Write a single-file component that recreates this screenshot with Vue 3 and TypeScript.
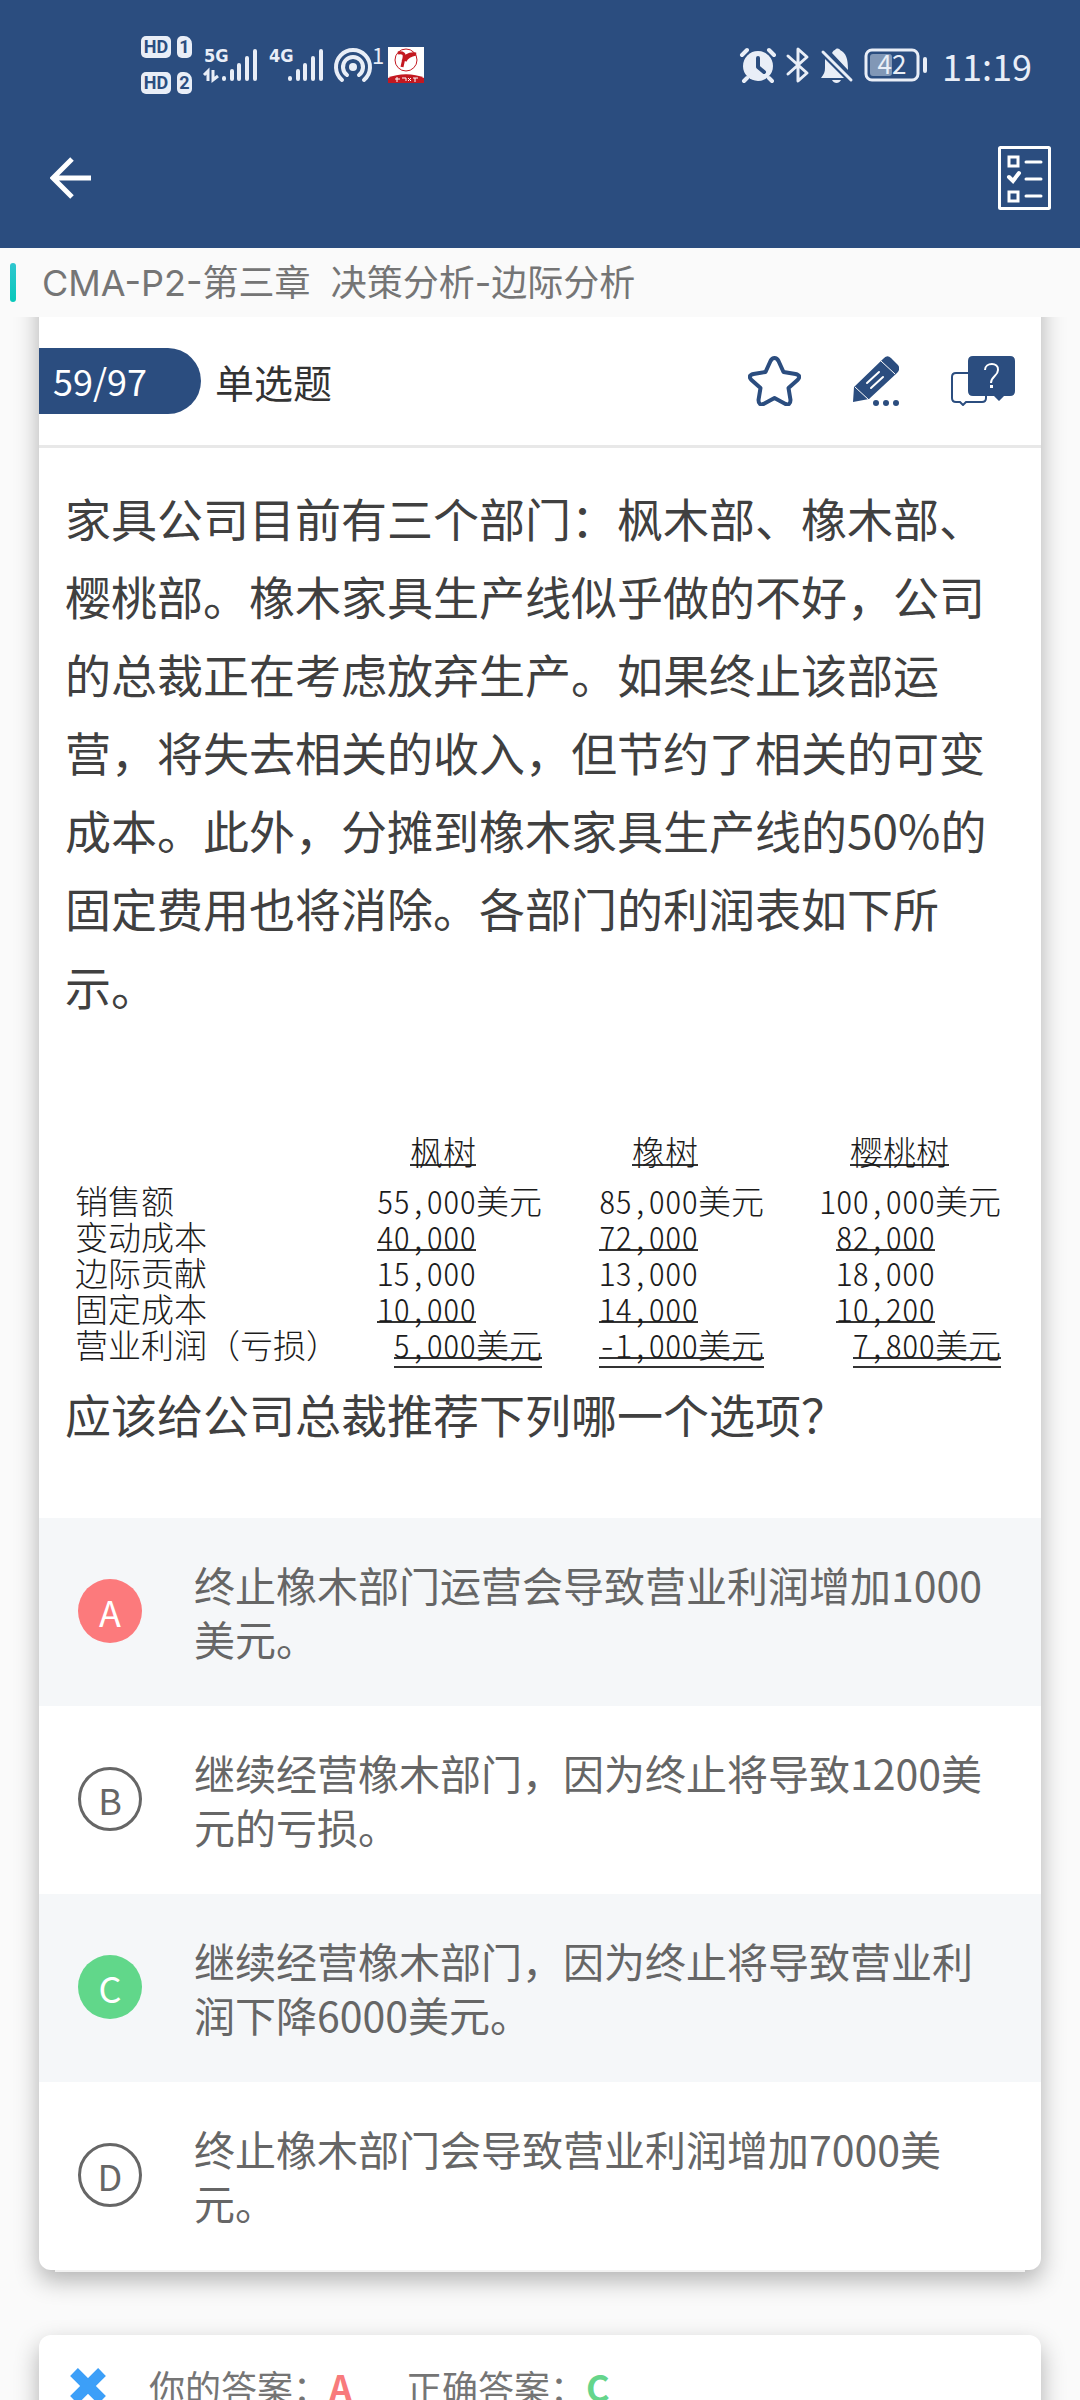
<script setup lang="ts">
import { ref } from 'vue'

interface Option {
  key: string
  text: string
  state: 'wrong' | 'right' | 'plain'
}

interface Amount {
  value: string
  unit?: string
  rule?: 'single' | 'double'
}

interface ProfitRow {
  label: string
  cells: Amount[]
}

const chapter = 'CMA-P2-第三章\u00a0 决策分析-边际分析'

const stem =
  '家具公司目前有三个部门：枫木部、橡木部、樱桃部。橡木家具生产线似乎做的不好，公司的总裁正在考虑放弃生产。如果终止该部运营，将失去相关的收入，但节约了相关的可变成本。此外，分摊到橡木家具生产线的50%的固定费用也将消除。各部门的利润表如下所示。'

const ask = '应该给公司总裁推荐下列哪一个选项？'

const departments: string[] = ['枫树', '橡树', '樱桃树']

const rows: ProfitRow[] = [
  {
    label: '销售额',
    cells: [
      { value: '55,000', unit: '美元' },
      { value: '85,000', unit: '美元' },
      { value: '100,000', unit: '美元' },
    ],
  },
  {
    label: '变动成本',
    cells: [
      { value: '40,000', rule: 'single' },
      { value: '72,000', rule: 'single' },
      { value: '82,000', rule: 'single' },
    ],
  },
  { label: '边际贡献', cells: [{ value: '15,000' }, { value: '13,000' }, { value: '18,000' }] },
  {
    label: '固定成本',
    cells: [
      { value: '10,000', rule: 'single' },
      { value: '14,000', rule: 'single' },
      { value: '10,200', rule: 'single' },
    ],
  },
  {
    label: '营业利润（亏损）',
    cells: [
      { value: '5,000', unit: '美元', rule: 'double' },
      { value: '-1,000', unit: '美元', rule: 'double' },
      { value: '7,800', unit: '美元', rule: 'double' },
    ],
  },
]

const options: Option[] = [
  { key: 'A', text: '终止橡木部门运营会导致营业利润增加1000美元。', state: 'wrong' },
  { key: 'B', text: '继续经营橡木部门，因为终止将导致1200美元的亏损。', state: 'plain' },
  { key: 'C', text: '继续经营橡木部门，因为终止将导致营业利润下降6000美元。', state: 'right' },
  { key: 'D', text: '终止橡木部门会导致营业利润增加7000美元。', state: 'plain' },
]

const chosen = ref<string>('A')
</script>

<template>
  <div class="page">
    <header class="top">
      <div class="status">
        <div class="status-left">
          <div class="hd-list">
            <div v-for="n in 2" :key="n" class="hd-row">
              <span class="hd">HD</span>
              <span class="sim">{{ n }}</span>
            </div>
          </div>
          <svg class="signal" width="54" height="36" viewBox="0 0 54 36" aria-hidden="true">
            <text x="0" y="15" class="net">5G</text>
            <g fill="none" stroke="#e9eef7" stroke-width="3">
              <path d="M0 28l4-4v10M9 23v10l5-4" />
            </g>
            <g stroke="#e9eef7" stroke-width="4" stroke-linecap="round">
              <path d="M20 31v1M28 24v8M35 18v14M43 11v21M51 4v28" />
            </g>
          </svg>
          <svg class="signal" width="54" height="36" viewBox="0 0 54 36" aria-hidden="true">
            <text x="0" y="15" class="net">4G</text>
            <g stroke="#e9eef7" stroke-width="4" stroke-linecap="round">
              <path d="M21 31v1M29 24v8M36 18v14M44 11v21M52 4v28" />
            </g>
          </svg>
          <svg class="hotspot" width="48" height="36" viewBox="0 0 48 36" aria-hidden="true">
            <circle cx="19" cy="20" r="4" fill="#e9eef7" />
            <g fill="none" stroke="#e9eef7" stroke-width="4" stroke-linecap="round">
              <path d="M13 28a10 10 0 1 1 12 0" />
              <path d="M8 33a17 17 0 1 1 22 0" />
            </g>
            <text x="38" y="17" class="sup">1</text>
          </svg>
          <svg width="36" height="36" viewBox="0 0 36 36" aria-hidden="true">
            <rect width="36" height="36" fill="#fff" />
            <circle cx="18" cy="13" r="11" fill="none" stroke="#c31820" stroke-width="1" />
            <path
              d="M10 6c5-1 7 1 6 5l-2 9M15 14c2-5 6-8 13-7-5 1-9 3-11 7"
              fill="none"
              stroke="#c31820"
              stroke-width="3"
            />
            <path d="M0 36v-5c10-5 26-5 36 0v5z" fill="#c31820" />
            <path
              d="M7 32h5M9 30v5M14 31h4v3M20 31l3 3M23 31l-3 3M25 31h5M27 31v4"
              stroke="#fff"
              stroke-width="1"
              fill="none"
            />
          </svg>
        </div>
        <div class="status-right">
          <svg width="36" height="36" viewBox="0 0 36 36" aria-hidden="true">
            <circle cx="18" cy="19" r="15" fill="#e9eef7" />
            <path
              d="M2 8l5-5M34 8l-5-5M7 31l-3 3M29 31l3 3"
              stroke="#e9eef7"
              stroke-width="4"
              stroke-linecap="round"
            />
            <path
              d="M18 11v9l6 5"
              fill="none"
              stroke="#2b4d7f"
              stroke-width="4"
              stroke-linecap="round"
              stroke-linejoin="round"
            />
          </svg>
          <svg width="24" height="36" viewBox="0 0 24 36" aria-hidden="true">
            <path
              d="M2 9l19 17-9 8V2l9 8L2 27"
              fill="none"
              stroke="#e9eef7"
              stroke-width="3"
              stroke-linecap="round"
              stroke-linejoin="round"
            />
          </svg>
          <svg width="34" height="36" viewBox="0 0 34 36" aria-hidden="true">
            <path
              d="M5 12L24 31H1c3-4 4-6 4-10zM12 6c1-2 2-3 3-3 2-3 5-1 5 0 6 3 8 8 8 20z"
              fill="#e9eef7"
            />
            <path d="M12 33h9c-2 4-7 4-9 0z" fill="#e9eef7" />
            <path d="M3 5l28 28" stroke="#e9eef7" stroke-width="3" stroke-linecap="round" />
          </svg>
          <svg width="64" height="36" viewBox="0 0 64 36" aria-hidden="true">
            <rect x="2" y="3" width="52" height="30" rx="6" fill="none" stroke="#e9eef7" stroke-width="3" />
            <rect x="6" y="7" width="22" height="22" rx="3" fill="#8197b6" />
            <rect x="59" y="10" width="4" height="16" rx="2" fill="#e9eef7" />
            <text x="28" y="27" class="battery">42</text>
          </svg>
          <span class="clock">11:19</span>
        </div>
      </div>
      <nav class="nav">
        <button type="button" class="icon-btn" aria-label="返回">
          <svg width="42" height="42" viewBox="0 0 42 42">
            <path d="M41 21H4M22 2L3 21l19 19" fill="none" stroke="#fff" stroke-width="5" />
          </svg>
        </button>
        <button type="button" class="icon-btn" aria-label="答题卡">
          <svg width="53" height="64" viewBox="0 0 53 64">
            <rect x="1.500" y="1.500" width="50" height="61" rx="1" fill="none" stroke="#fff" stroke-width="3" />
            <g fill="none" stroke="#fff" stroke-width="3">
              <rect x="11" y="11" width="9" height="9" />
              <rect x="11" y="46" width="9" height="9" />
              <path d="M11 31l4 4 6-8" stroke-width="4" stroke-linecap="round" />
              <path d="M28 16h15M28 33h15M28 50h15" stroke-linecap="round" />
            </g>
          </svg>
        </button>
      </nav>
    </header>

    <div class="chapter">
      <span class="chapter-bar"></span>
      <h1 class="chapter-title">{{ chapter }}</h1>
    </div>

    <main class="content">
      <section class="card question">
        <div class="card-head">
          <span class="progress">59/97</span>
          <span class="kind">单选题</span>
          <div class="tools">
            <button type="button" class="icon-btn" aria-label="收藏">
              <svg width="53" height="50" viewBox="0 0 53 50">
                <path
                  d="M26.500 2c2 0 3 1 4 3l5 11 12 2c4 1 5 3 2 6l-9 8 2 12c0 4-2 5-5 4l-11-6-11 6c-3 1-5 0-5-4l2-12-9-8c-3-3-2-5 2-6l12-2 5-11c1-2 2-3 4-3z"
                  fill="none"
                  stroke="#2b4d7f"
                  stroke-width="4"
                  stroke-linejoin="round"
                />
              </svg>
            </button>
            <button type="button" class="icon-btn" aria-label="笔记">
              <svg width="46" height="50" viewBox="0 0 46 50">
                <path d="M30 3q4-5 8-1l7 7q3 4-1 8L16 43 0 46l1-15z" fill="#2b4d7f" />
                <path d="M2 31l14 13M28 5l14 13" stroke="#fff" stroke-width="1" />
                <path d="M14 27l12-11M18 32l12-11" stroke="#fff" stroke-width="2" stroke-linecap="round" />
                <g fill="#2b4d7f">
                  <circle cx="23" cy="47" r="3" />
                  <circle cx="33" cy="47" r="3" />
                  <circle cx="43" cy="47" r="3" />
                </g>
              </svg>
            </button>
            <button type="button" class="icon-btn" aria-label="答疑">
              <svg width="64" height="50" viewBox="0 0 64 50">
                <path
                  d="M17 17H5c-3 0-4 1-4 4v21c0 3 1 4 4 4h4l3 3 3-3h16c3 0 4-1 4-4v-3"
                  fill="none"
                  stroke="#2b4d7f"
                  stroke-width="2"
                />
                <path d="M22 0h37q5 0 5 5v30q0 5-5 5h-6l-5 5-5-5H22q-5 0-5-5V5q0-5 5-5z" fill="#2b4d7f" />
                <path d="M34 14c0-8 14-8 13 0 0 6-7 6-7 13" fill="none" stroke="#fff" stroke-width="2" />
                <rect x="39" y="29" width="3" height="3" fill="#fff" />
              </svg>
            </button>
          </div>
        </div>

        <div class="article">
          <p class="stem">{{ stem }}</p>
          <table class="profit">
            <colgroup>
              <col />
              <col class="amount-col" />
              <col class="amount-col" />
              <col class="amount-col wide" />
            </colgroup>
            <thead>
              <tr>
                <td></td>
                <th v-for="d in departments" :key="d" scope="col">
                  <span class="figure single">{{ d }}</span>
                </th>
              </tr>
            </thead>
            <tbody>
              <tr v-for="row in rows" :key="row.label">
                <th scope="row">{{ row.label }}</th>
                <td v-for="(cell, i) in row.cells" :key="i" :class="{ bare: !cell.unit }">
                  <span class="figure" :class="cell.rule">{{ cell.value }}{{ cell.unit }}</span>
                </td>
              </tr>
            </tbody>
          </table>
          <p class="stem">{{ ask }}</p>
        </div>

        <div class="options" role="radiogroup" aria-label="选项">
          <label v-for="o in options" :key="o.key" class="option">
            <span class="mark" :class="o.state">
              <input v-model="chosen" type="radio" name="answer" :value="o.key" />
              <span class="letter">{{ o.key }}</span>
            </span>
            <span class="option-text">{{ o.text }}</span>
          </label>
        </div>
      </section>

      <section class="card result">
        <svg width="38" height="38" viewBox="0 0 38 38" aria-hidden="true">
          <path d="M5 5l28 28M33 5L5 33" stroke="#3c9ff8" stroke-width="11" />
        </svg>
        <p class="verdict">你的答案：<b class="bad">A</b></p>
        <p class="verdict">正确答案：<b class="good">C</b></p>
      </section>
    </main>
  </div>
</template>

<style>
body {
  background: #fafafa;
}
</style>

<style scoped>
.page {
  display: flex;
  flex-direction: column;
  height: 100vh;
  overflow: hidden;
  background: #fafafa;
  color: #404040;
  font-family: 'Noto Sans CJK SC', sans-serif;
}

.top {
  flex: none;
  background: #2b4d7f;
}

.status {
  display: flex;
  align-items: center;
  justify-content: space-between;
  height: 108px;
  padding: 22px 48px 0 141px;
  box-sizing: border-box;
  color: #e9eef7;
}

.status-left,
.status-right {
  display: flex;
  align-items: center;
}

.status svg {
  overflow: visible;
}

.status-right {
  gap: 10px;
}

.hd-list {
  display: grid;
  gap: 14px;
  margin-right: 12px;
}

.hd-row {
  display: flex;
  gap: 6px;
}

.hd,
.sim {
  height: 22px;
  border-radius: 5px;
  background: #e9eef7;
  color: #2b4d7f;
  font: bold 18px/22px Roboto, sans-serif;
  text-align: center;
}

.hd {
  width: 30px;
}

.sim {
  width: 15px;
  border-top-right-radius: 8px;
}

.signal {
  margin-right: 11px;
}

.hotspot {
  margin-right: 6px;
}

.net {
  fill: #e9eef7;
  font: bold 18px 'Liberation Sans Narrow', 'DejaVu Sans Condensed', sans-serif;
}

.sup {
  fill: #e9eef7;
  font: 22px 'Noto Sans CJK SC', sans-serif;
}

.battery {
  fill: #e9eef7;
  font: 26px 'Noto Sans CJK SC', sans-serif;
  text-anchor: middle;
}

.clock {
  margin-left: 4px;
  font-size: 36px;
  line-height: 36px;
}

.nav {
  display: flex;
  align-items: center;
  justify-content: space-between;
  height: 140px;
  padding: 0 29px 0 50px;
}

.icon-btn {
  display: flex;
  padding: 0;
  border: 0;
  background: none;
}

.chapter {
  position: relative;
  z-index: 1;
  display: flex;
  flex: none;
  align-items: center;
  gap: 26px;
  height: 69px;
  padding-left: 10px;
  background: #fafafa;
}

.chapter-bar {
  width: 6px;
  height: 39px;
  border-radius: 3px;
  background: linear-gradient(#2fc6cf, #08c8ba);
}

.chapter-title {
  margin: 0;
  color: #757575;
  font-family: Inter, 'Noto Sans CJK SC', sans-serif;
  font-size: 36px;
  font-weight: 400;
  line-height: 48px;
  white-space: pre;
}

.content {
  flex: 1;
  min-height: 0;
  margin-top: -40px;
  padding: 0 39px;
  overflow-y: auto;
  scrollbar-width: none;
}

.card {
  background: #fff;
  box-shadow: 0 10px 24px rgba(0, 0, 0, 0.3);
}

.question {
  position: relative;
  padding-top: 40px;
  border-radius: 0 0 12px 12px;
}

.question::after {
  position: absolute;
  right: 16px;
  bottom: -2px;
  left: 16px;
  height: 2px;
  background: #f2f2f2;
  content: '';
}

.card-head {
  display: flex;
  align-items: center;
  height: 128px;
  padding-right: 26px;
  border-bottom: 3px solid #e8e8e8;
}

.progress {
  width: 162px;
  height: 66px;
  padding-left: 14px;
  box-sizing: border-box;
  border-radius: 0 33px 33px 0;
  background: #2b4d7f;
  color: #fff;
  font-size: 36px;
  line-height: 64px;
}

.kind {
  margin-left: 14px;
  color: #333;
  font-size: 39px;
  line-height: 64px;
}

.tools {
  display: flex;
  gap: 52px;
  margin-left: auto;
}

.article {
  padding: 30px 26px 66px;
}

.stem {
  margin: 0;
  font-size: 46px;
  line-height: 78px;
}

.profit {
  width: calc(100% - 14px);
  margin: 114px 0 6px;
  border-collapse: collapse;
  table-layout: fixed;
  color: #1c1c1c;
  font-size: 33px;
  font-weight: 300;
  line-height: 26px;
}

.amount-col {
  width: 222px;
}

.amount-col.wide {
  width: 237px;
}

.profit th,
.profit td {
  height: 36px;
  padding: 0;
  font-weight: 300;
  text-align: right;
  vertical-align: top;
  white-space: nowrap;
}

.profit tbody th {
  padding-left: 10px;
  text-align: left;
}

.profit thead th {
  height: 49px;
  padding-right: 66px;
}

.profit thead th:last-child {
  padding-right: 52px;
}

.profit td.bare {
  padding-right: 66px;
}

.figure {
  display: inline-block;
  vertical-align: top;
  font-feature-settings: 'hwid' 1;
}

.single::after,
.double::after {
  display: block;
  border-top: 2px solid #333;
  content: '';
}

.double::after {
  height: 7px;
  border-bottom: 2px solid #333;
}

.option {
  display: flex;
  align-items: center;
  gap: 52px;
  padding: 39px 40px 41px 39px;
}

.option:nth-child(odd) {
  background: #f5f7f9;
}

.option:last-child {
  border-radius: 0 0 12px 12px;
}

.mark {
  display: grid;
  flex: none;
  place-items: center;
  color: #666;
}

.mark input {
  grid-area: 1 / 1;
  width: 64px;
  height: 64px;
  margin: 0;
  box-sizing: border-box;
  border: 3px solid #666;
  border-radius: 50%;
  appearance: none;
}

.letter {
  z-index: 1;
  grid-area: 1 / 1;
  font-size: 36px;
  line-height: 64px;
}

.wrong,
.right {
  color: #fff;
}

.wrong input {
  border: 0;
  background: #fc7a7c;
}

.right input {
  border: 0;
  background: #61d78a;
}

.option-text {
  color: #666;
  font-size: 41px;
  line-height: 54px;
}

.result {
  display: flex;
  align-items: center;
  height: 102px;
  margin-top: 65px;
  padding: 0 30px;
  border-radius: 12px;
}

.verdict {
  margin: 0 0 0 42px;
  color: #757575;
  font-size: 36px;
  line-height: 48px;
}

.verdict + .verdict {
  margin-left: 54px;
}

.bad {
  color: #f87b7c;
}

.good {
  color: #65d58b;
}
</style>
